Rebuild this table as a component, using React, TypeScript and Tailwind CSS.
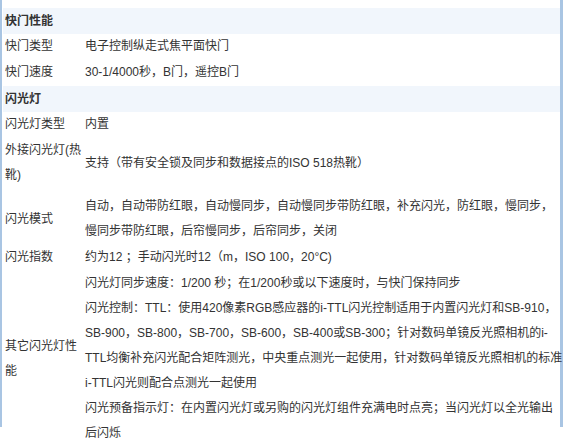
type Row =
  | { kind: 'head'; title: string }
  | { kind: 'row'; label: string[]; value: string[]; pad?: string };

const rows: Row[] = [
  { kind: 'row', label: [''], value: ['自动曝光锁定，自动对焦锁定'] },
  { kind: 'head', title: '快门性能' },
  { kind: 'row', label: ['快门类型'], value: ['电子控制纵走式焦平面快门'] },
  { kind: 'row', label: ['快门速度'], value: ['30-1/4000秒，B门，遥控B门'] },
  { kind: 'head', title: '闪光灯' },
  { kind: 'row', label: ['闪光灯类型'], value: ['内置'] },
  {
    kind: 'row',
    label: ['外接闪光灯(热', '靴)'],
    value: ['支持（带有安全锁及同步和数据接点的ISO 518热靴）'],
    pad: 'pb-[4px]',
  },
  {
    kind: 'row',
    label: ['闪光模式'],
    value: [
      '自动，自动带防红眼，自动慢同步，自动慢同步带防红眼，补充闪光，防红眼，慢同步，',
      '慢同步带防红眼，后帘慢同步，后帘同步，关闭',
    ],
    pad: 'pt-[2px] pb-px',
  },
  { kind: 'row', label: ['闪光指数'], value: ['约为12 ；手动闪光时12（m，ISO 100，20°C)'] },
  {
    kind: 'row',
    label: ['其它闪光灯性', '能'],
    value: [
      '闪光灯同步速度：1/200 秒；在1/200秒或以下速度时，与快门保持同步',
      '闪光控制：TTL：使用420像素RGB感应器的i-TTL闪光控制适用于内置闪光灯和SB-910，',
      'SB-900，SB-800，SB-700，SB-600，SB-400或SB-300；针对数码单镜反光照相机的i-',
      'TTL均衡补充闪光配合矩阵测光，中央重点测光一起使用，针对数码单镜反光照相机的标准',
      'i-TTL闪光则配合点测光一起使用',
      '闪光预备指示灯：在内置闪光灯或另购的闪光灯组件充满电时点亮；当闪光灯以全光输出',
      '后闪烁',
    ],
  },
];

export default function App() {
  return (
    <div
      className="w-[563px] h-[445px] overflow-hidden bg-white text-[12px] leading-[25px] text-[#333]"
      style={{ fontFamily: '"Liberation Sans", "Noto Sans CJK SC", sans-serif' }}
    >
      <div className="h-full border-l-[2px] border-r-[3px] border-[#a9c5e3] pl-px">
        <div className="-mt-[18px] flex flex-col">
          {rows.map((r, i) =>
            r.kind === 'head' ? (
              <div key={i} className="h-[26px] flex items-center bg-[#f1f6fc] pl-[2px] font-bold">
                {r.title}
              </div>
            ) : (
              <div key={i} className={`flex items-center ${r.pad ?? 'pb-px'}`}>
                <div className="w-[82px] shrink-0 pl-[2px] whitespace-nowrap">
                  {r.label.map((l, j) => (
                    <div key={j} className="h-[25px]">{l}</div>
                  ))}
                </div>
                <div className="flex-1 whitespace-nowrap">
                  {r.value.map((v, j) => (
                    <div key={j} className="h-[25px]">{v}</div>
                  ))}
                </div>
              </div>
            )
          )}
        </div>
      </div>
    </div>
  );
}
